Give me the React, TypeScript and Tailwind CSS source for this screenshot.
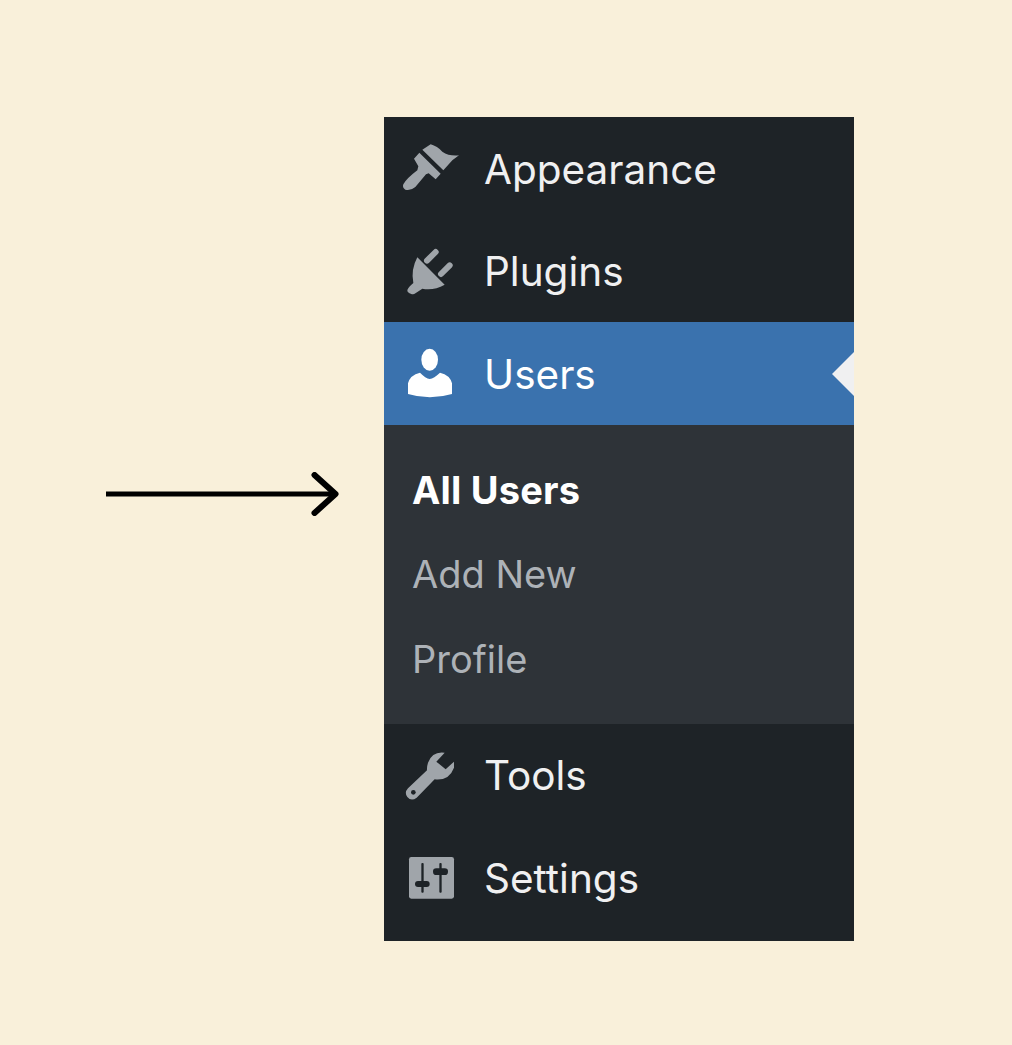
import React from "react";

const font = "font-['Inter','Liberation_Sans',sans-serif]";

function BrushIcon() {
  return (
    <svg width="60" height="60" viewBox="48 69 180 180" fill="#a0a5aa">
      <path d="M115 98 L140 82 Q160 88 175 104 Q195 118 225 115 L205 130 L178 160 Z" />
      <path d="M106 107 L170 170 L155 187 L134 169 L126 172 L94 210 Q80 222 64 218 Q54 212 58 202 Q68 184 100 160 L103 148 L90 125 Z" />
    </svg>
  );
}

function PlugIcon() {
  return (
    <svg width="60" height="60" viewBox="48 375 180 180" fill="#a0a5aa">
      <path d="M100 418 L182 500 Q150 518 115 512 L92 527 Q78 533 70 520 Q68 512 88 495 Q80 455 100 418 Z" />
      <path d="M129 428 L155 402 M171 468 L197 442" stroke="#a0a5aa" strokeWidth="18" strokeLinecap="round" />
    </svg>
  );
}

function UserIcon() {
  return (
    <svg width="60" height="60" viewBox="48 75 180 180" fill="#ffffff">
      <ellipse cx="137" cy="119" rx="25" ry="33" />
      <path d="M72 222 L72 190 Q78 165 108 158 Q125 175 137 177 Q150 175 168 158 Q198 165 204 190 L204 222 Q137 242 72 222 Z" />
    </svg>
  );
}

function WrenchIcon() {
  return (
    <svg width="60" height="60" viewBox="48 48 180 180" fill="#a0a5aa">
      <path d="M182 65 Q145 60 132 95 Q128 108 129 118 L72 172 Q60 185 70 198 Q82 212 98 200 L152 145 Q195 150 210 110 L210 92 L185 115 L157 92 Z" />
      <circle cx="88" cy="184" r="7" fill="#1e2327" />
    </svg>
  );
}

function SlidersIcon() {
  return (
    <svg width="60" height="60" viewBox="48 357 180 180">
      <rect x="75" y="378" width="135" height="125" rx="7" fill="#a0a5aa" />
      <rect x="112" y="396" width="7" height="89" rx="3" fill="#1e2327" />
      <rect x="93" y="450" width="44" height="18" rx="9" fill="#1e2327" />
      <rect x="166" y="396" width="7" height="89" rx="3" fill="#1e2327" />
      <rect x="147" y="412" width="45" height="20" rx="10" fill="#1e2327" />
    </svg>
  );
}

function MenuRow({
  icon,
  label,
  className,
}: {
  icon: React.ReactNode;
  label: string;
  className: string;
}) {
  return (
    <div className={`flex items-center pl-[16px] ${className}`}>
      <div className="w-[84px] shrink-0">{icon}</div>
      <span className="text-[40.5px] leading-none text-[#f0f0f1]">{label}</span>
    </div>
  );
}

export default function App() {
  return (
    <div className={`${font} flex h-[1045px] items-start bg-[#f9f0da] pl-[106px] pt-[117px]`}>
      {/* pointer arrow */}
      <svg width="234" height="44" viewBox="0 0 234 44" className="mt-[355px] shrink-0" fill="none" stroke="#000000">
        <path d="M0 22 H228" strokeWidth="5" />
        <path d="M208.5 3 L229.5 22 L208.5 41" strokeWidth="6" strokeLinecap="round" strokeLinejoin="round" />
      </svg>

      <div className="ml-[44px] w-[470px] bg-[#1e2327] pb-[11px] pt-[2px]">
        <MenuRow icon={<BrushIcon />} label="Appearance" className="h-[102px]" />
        <MenuRow icon={<PlugIcon />} label="Plugins" className="h-[101px] pt-[2px]" />

        <div className="relative flex h-[103px] items-center bg-[#3a72ae] pl-[16px] pt-[3px]">
          <div className="w-[84px] shrink-0">
            <UserIcon />
          </div>
          <span className="text-[40.5px] leading-none text-white">Users</span>
          <div className="absolute right-0 top-[30px] border-y-[22px] border-r-[22px] border-y-transparent border-r-[#f0f0f1]" />
        </div>

        <div className="flex h-[299px] flex-col bg-[#2e3338] pl-[28px] pt-[23px] text-[38px]">
          <div className="flex h-[84px] items-center font-bold tracking-[0.2px] text-white">All Users</div>
          <div className="flex h-[85px] items-center text-[#adb2b7]">Add New</div>
          <div className="flex h-[84px] items-center text-[#adb2b7]">Profile</div>
        </div>

        <MenuRow icon={<WrenchIcon />} label="Tools" className="h-[103px] pt-[2px]" />
        <MenuRow icon={<SlidersIcon />} label="Settings" className="h-[103px] pt-[2px]" />
      </div>
    </div>
  );
}
